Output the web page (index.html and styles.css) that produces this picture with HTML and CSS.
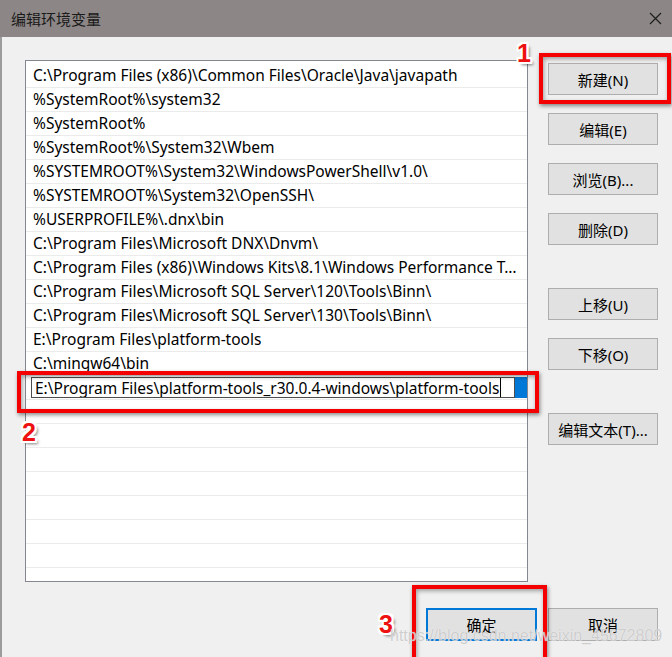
FILE: index.html
```html
<!DOCTYPE html>
<html lang="zh-CN">
<head>
  <meta charset="UTF-8">
  <title>编辑环境变量</title>
  <link rel="stylesheet" href="styles.css">
</head>
<body>
  <div class="window">
    <div class="titlebar">
      <span class="title">编辑环境变量</span>
      <svg class="close" width="13" height="13" viewBox="0 0 13 13">
        <path d="M1 1 L12 12 M12 1 L1 12" stroke="#1e1e1e" stroke-width="1.2" fill="none"/>
      </svg>
    </div>

    <div class="content">
      <div class="main">
        <!-- path list -->
        <div class="listbox">
          <div class="row">C:\Program Files (x86)\Common Files\Oracle\Java\javapath</div>
          <div class="row">%SystemRoot%\system32</div>
          <div class="row">%SystemRoot%</div>
          <div class="row">%SystemRoot%\System32\Wbem</div>
          <div class="row">%SYSTEMROOT%\System32\WindowsPowerShell\v1.0\</div>
          <div class="row">%SYSTEMROOT%\System32\OpenSSH\</div>
          <div class="row">%USERPROFILE%\.dnx\bin</div>
          <div class="row">C:\Program Files\Microsoft DNX\Dnvm\</div>
          <div class="row">C:\Program Files (x86)\Windows Kits\8.1\Windows Performance Toolkit\</div>
          <div class="row">C:\Program Files\Microsoft SQL Server\120\Tools\Binn\</div>
          <div class="row">C:\Program Files\Microsoft SQL Server\130\Tools\Binn\</div>
          <div class="row">E:\Program Files\platform-tools</div>
          <div class="row">C:\mingw64\bin</div>
          <div class="row editing">
            <div class="edit-box"><span class="caret">E:\Program Files\platform-tools_r30.0.4-windows\platform-tools</span></div>
            <div class="sel"></div>
          </div>
          <div class="row"></div>
          <div class="row"></div>
          <div class="row"></div>
          <div class="row"></div>
          <div class="row"></div>
          <div class="row"></div>
          <div class="row"></div>
          <div class="row"></div>
        </div>

        <!-- side buttons -->
        <div class="side">
          <button class="btn">新建(N)</button>
          <button class="btn">编辑(E)</button>
          <button class="btn">浏览(B)...</button>
          <button class="btn">删除(D)</button>
          <button class="btn spaced">上移(U)</button>
          <button class="btn">下移(O)</button>
          <button class="btn spaced">编辑文本(T)...</button>
        </div>
      </div>

      <div class="footer">
        <button class="btn default">确定</button>
        <button class="btn">取消</button>
      </div>
    </div>

    <!-- annotations -->
    <div class="mark box-new"></div>
    <div class="mark box-edit"></div>
    <div class="mark box-ok"></div>
    <span class="num num-1">1</span>
    <span class="num num-2">2</span>
    <span class="num num-3">3</span>
    <span class="watermark">https://blog.csdn.net/weixin_45672809</span>
  </div>
</body>
</html>
```

FILE: styles.css
```css
body {
  margin: 0;
  padding: 0;
  font-family: "Noto Sans", "Noto Sans CJK SC", sans-serif;
  font-size: 15.5px;
  color: #000;
}
.window {
  position: relative;
  width: 672px;
  height: 657px;
  background-color: #f0f0f0;
  overflow: hidden;
}
.titlebar {
  height: 37px;
  background-color: #8c8786;
  display: flex;
  align-items: center;
  justify-content: space-between;
  padding: 0 10px 0 11px;
  box-sizing: border-box;
}
.title {
  font-family: "Noto Sans CJK SC", sans-serif;
  font-size: 15px;
  color: #1a1a1a;
}
.content {
  border-left: 2px solid #9c9c9c;
  padding: 23px 14px 0 23px;
  height: 620px;
  box-sizing: border-box;
}
.main {
  display: flex;
  gap: 20px;
}
.listbox {
  width: 503px;
  height: 522px;
  box-sizing: border-box;
  border: 1px solid #828790;
  background-color: white;
  padding-top: 3px;
  overflow: hidden;
}
.row {
  height: 24px;
  box-sizing: border-box;
  border-bottom: 1px solid #ebebeb;
  padding: 0 8px 0 7px;
  line-height: 23px;
  white-space: nowrap;
  overflow: hidden;
  text-overflow: ellipsis;
}
.row.editing {
  display: flex;
  padding: 1px 0 1px 5px;
}
.edit-box {
  flex: 1;
  border: 1px solid #4d4d4d;
  background-color: white;
  line-height: 20px;
  padding-left: 3px;
  white-space: nowrap;
  overflow: hidden;
}
.caret {
  border-right: 1px solid #000;
  padding-right: 1px;
}
.sel {
  width: 12px;
  background-color: #0078d7;
}
.side {
  display: flex;
  flex-direction: column;
  gap: 18px;
  padding-top: 3px;
}
.btn {
  width: 110px;
  height: 32px;
  box-sizing: border-box;
  background-color: #e1e1e1;
  border: 1px solid #adadad;
  font-family: "Noto Sans", "Noto Sans CJK SC", sans-serif;
  font-size: 15px;
  color: #000;
  padding: 0;
}
.btn.spaced {
  margin-top: 25px;
}
.footer {
  display: flex;
  justify-content: flex-end;
  gap: 11px;
  margin-top: 26px;
}
.footer .btn {
  height: 33px;
}
.btn.default {
  width: 111px;
  border: 2px solid #0078d7;
}

/* red markers drawn over the dialog */
.mark {
  position: absolute;
  border: 4px solid #f50000;
  box-shadow: 1px 2px 4px rgba(0, 0, 0, 0.45), inset 1px 2px 4px rgba(0, 0, 0, 0.35);
  box-sizing: border-box;
}
.box-new {
  left: 539px;
  top: 53px;
  width: 132px;
  height: 51px;
}
.box-edit {
  left: 17px;
  top: 371px;
  width: 522px;
  height: 42px;
}
.box-ok {
  left: 412px;
  top: 585px;
  width: 135px;
  height: 90px;
}
.num {
  position: absolute;
  font-family: "Liberation Sans", sans-serif;
  font-weight: bold;
  font-size: 25px;
  line-height: 1;
  color: #ee1111;
  text-shadow:
    2px 0 0 #fff, -2px 0 0 #fff, 0 2px 0 #fff, 0 -2px 0 #fff,
    2px 2px 0 #fff, -2px -2px 0 #fff, 2px -2px 0 #fff, -2px 2px 0 #fff,
    3px 3px 3px rgba(0, 0, 0, 0.5);
}
.num-1 {
  left: 517px;
  top: 41px;
}
.num-2 {
  left: 22px;
  top: 420px;
}
.num-3 {
  left: 379px;
  top: 612px;
}
.watermark {
  position: absolute;
  left: 390px;
  top: 627px;
  font-family: "Liberation Sans", sans-serif;
  font-size: 16px;
  color: rgba(190, 190, 190, 0.75);
  text-shadow: 0 0 1px #fff;
  white-space: nowrap;
}
```
